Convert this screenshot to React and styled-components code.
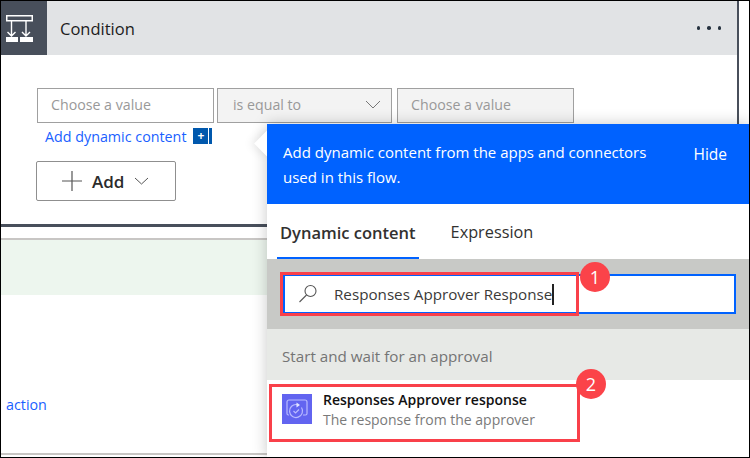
import React from "react";
import styled, { createGlobalStyle } from "styled-components";

const Global = createGlobalStyle`
  html, body { margin: 0; padding: 0; background: #fff; }
  * { box-sizing: border-box; }
`;

const Page = styled.div`
  position: relative;
  width: 750px;
  height: 458px;
  border: 1px solid #000;
  overflow: hidden;
  font-family: "Open Sans", "Noto Sans", sans-serif;
  background: #fff;
`;

const Card = styled.div`
  width: 738px;
  height: 226px;
  border-right: 2px solid #484f5b;
  border-bottom: 3px solid #484f5b;
`;

const Header = styled.div`
  display: flex;
  align-items: center;
  height: 54px;
  background: #e1e3e5;
`;

const IconBox = styled.div`
  width: 46px;
  height: 54px;
  padding-left: 5px;
  background: #484f5b;
  display: flex;
  align-items: center;
  flex: none;
`;

const Title = styled.div`
  margin: 1px 0 0 13px;
  font-size: 16.5px;
  color: #1c1c1c;
  flex: 1;
`;

const Dots = styled.div`
  display: flex;
  gap: 7px;
  margin-right: 16px;
`;

const Dot = styled.span`
  width: 3.5px;
  height: 3.5px;
  border-radius: 50%;
  background: #26323f;
`;

const Body = styled.div`
  padding: 33px 0 0 36px;
`;

const Fields = styled.div`
  display: flex;
  gap: 3px;
`;

const Field = styled.div`
  display: flex;
  align-items: center;
  justify-content: space-between;
  width: ${(p) => p.$w}px;
  margin-right: ${(p) => p.$mr || 0}px;
  height: 35px;
  padding: 0 13px 2px;
  border: 1px solid #a0a0a0;
  background: ${(p) => (p.$filled ? "#f3f3f3" : "#fff")};
  color: #999;
  font-size: 14.2px;
`;

const SelectField = styled(Field)`
  padding: 0 10px 2px 15px;
`;

const LinkRow = styled.div`
  display: flex;
  align-items: center;
  height: 22px;
  margin: 2px 0 0 8px;
`;

const DynLink = styled.a`
  color: #1a5fff;
  font-size: 14.3px;
`;

const PlusBox = styled.span`
  width: 15px;
  height: 16px;
  margin-left: 7px;
  background: #0058ad;
  color: #fff;
  font-size: 12px;
  font-weight: 700;
  line-height: 15px;
  text-align: center;
`;

const PlusBar = styled.span`
  width: 3px;
  height: 16px;
  margin-left: 1px;
  background: #0058ad;
`;

const AddButton = styled.div`
  display: flex;
  align-items: center;
  width: 140px;
  height: 40px;
  margin: 14px 0 0 -1px;
  padding-left: 25px;
  border: 1px solid #8f8f8f;
  border-radius: 2px;
`;

const AddLabel = styled.span`
  margin: 0 10px;
  font-size: 17px;
  font-weight: 600;
  color: #2b2b2b;
`;

const GreyLine = styled.div`
  height: 2px;
  margin-top: ${(p) => p.$top}px;
  background: #c8c6c4;
`;

const GreenBand = styled.div`
  height: 55px;
  background: #edf6ee;
`;

const ActionLink = styled.a`
  display: block;
  margin: 100px 0 0 5px;
  height: 20px;
  color: #1a5fff;
  font-size: 14.3px;
`;

const Panel = styled.div`
  position: absolute;
  left: 266px;
  top: 123px;
  right: -1px;
  bottom: -1px;
  background: #fff;
  box-shadow: 0 0 14px rgba(0, 0, 0, 0.22);
`;

const Arrow = styled.div`
  position: absolute;
  left: -9px;
  top: 10px;
  width: 19px;
  height: 19px;
  background: #fff;
  transform: rotate(45deg);
  box-shadow: -3px 3px 8px rgba(0, 0, 0, 0.08);
`;

const Banner = styled.div`
  position: relative;
  display: flex;
  justify-content: space-between;
  height: 80px;
  padding: 16px 23px 0 16px;
  background: #0062ff;
  color: #fff;
  font-size: 15px;
  line-height: 25px;
`;

const BannerText = styled.div`
  width: 400px;
`;

const Hide = styled.span`
  margin-top: 2px;
  font-size: 15.5px;
`;

const Tabs = styled.div`
  display: flex;
  height: 55px;
  padding-left: 10px;
`;

const Tab = styled.div`
  display: flex;
  align-items: center;
  height: 55px;
  padding: 3px 3px 0;
  margin-right: 29px;
  font-size: ${(p) => (p.$active ? 16.5 : 16.3)}px;
  font-weight: ${(p) => (p.$active ? 600 : 400)};
  color: #323130;
  border-bottom: 2px solid ${(p) => (p.$active ? "#0062ff" : "transparent")};
`;

const SearchStrip = styled.div`
  height: 70px;
  padding: 15px 14px 0 16px;
  background: #c8c9c6;
`;

const SearchBox = styled.div`
  display: flex;
  align-items: center;
  height: 40px;
  padding-left: 13px;
  border: 2px solid #0062ff;
  background: #fff;
  color: #3b3a39;
  font-size: 15.2px;
`;

const SearchText = styled.span`
  margin-left: 16px;
`;

const Caret = styled.span`
  width: 1.5px;
  height: 21px;
  background: #222;
`;

const GroupLabel = styled.div`
  display: flex;
  align-items: center;
  height: 51px;
  padding: 3px 0 0 15px;
  background: #e7e9e6;
  color: #747474;
  font-size: 15.2px;
`;

const Result = styled.div`
  display: flex;
  padding: 14px 0 0 15px;
`;

const ResultIcon = styled.div`
  width: 30px;
  height: 30px;
  flex: none;
  background: #6264f0;
  display: flex;
  align-items: center;
  justify-content: center;
`;

const ResultText = styled.div`
  margin: -4px 0 0 11px;
  font-size: 14px;
  line-height: 20px;
`;

const ResultName = styled.div`
  font-weight: 600;
  color: #111;
`;

const ResultSub = styled.div`
  color: #7a7a7a;
`;

const RedBox = styled.div`
  position: absolute;
  left: ${(p) => p.$x}px;
  top: ${(p) => p.$y}px;
  width: ${(p) => p.$w}px;
  height: ${(p) => p.$h}px;
  border: 3px solid #f9404a;
`;

const Badge = styled.div`
  position: absolute;
  left: ${(p) => p.$x - 15}px;
  top: ${(p) => p.$y - 15}px;
  width: 30px;
  height: 30px;
  border-radius: 50%;
  background: #fb4349;
  color: #fff;
  font-size: 18px;
  line-height: 30px;
  text-align: center;
`;

function ConditionIcon() {
  return (
    <svg width="27" height="27" viewBox="0 0 27 27" fill="none" stroke="#fff">
      <rect x="0.75" y="0.75" width="25.5" height="5" strokeWidth="1.5" />
      <path d="M5.5 6v15M20 6v15M1.5 17l4 4 4-4M16 17l4 4 4-4" strokeWidth="1.4" />
      <rect x="0" y="22" width="12" height="5" fill="#fff" stroke="none" />
      <rect x="14" y="22" width="13" height="5" fill="#fff" stroke="none" />
    </svg>
  );
}

function ApprovalIcon() {
  return (
    <svg width="22" height="22" viewBox="0 0 22 22" fill="none" stroke="#b9bbff" strokeWidth="1.2">
      <path d="M3 17H2.5A1.5 1.5 0 0 1 1 15.5V4a2 2 0 0 1 2-2h16a2 2 0 0 1 2 2v11.5a1.5 1.5 0 0 1-1.5 1.5H17" />
      <path d="M15.5 9.5A6.5 6.5 0 1 1 11 6.6" />
      <path d="M10.5 4.5l3.5 2.5-3.5 2.5z" fill="#e4e5ff" stroke="none" />
      <path d="M7.5 13l2 2 3.5-3.5" />
    </svg>
  );
}

function App() {
  return (
    <Page>
      <Global />
      <Card>
        <Header>
          <IconBox>
            <ConditionIcon />
          </IconBox>
          <Title>Condition</Title>
          <Dots>
            <Dot />
            <Dot />
            <Dot />
          </Dots>
        </Header>
        <Body>
          <Fields>
            <Field $w={177}>Choose a value</Field>
            <SelectField $w={175} $mr={2} $filled>
              is equal to
              <svg width="16" height="9" viewBox="0 0 16 9" fill="none" stroke="#777">
                <path d="M1 1l7 7 7-7" />
              </svg>
            </SelectField>
            <Field $w={177} $filled>Choose a value</Field>
          </Fields>
          <LinkRow>
            <DynLink>Add dynamic content</DynLink>
            <PlusBox>+</PlusBox>
            <PlusBar />
          </LinkRow>
          <AddButton>
            <svg width="20" height="20" viewBox="0 0 20 20" stroke="#555" strokeWidth="1.2">
              <path d="M10 0v20M0 10h20" />
            </svg>
            <AddLabel>Add</AddLabel>
            <svg width="15" height="8" viewBox="0 0 15 8" fill="none" stroke="#555">
              <path d="M1 1l6.5 6L14 1" />
            </svg>
          </AddButton>
        </Body>
      </Card>
      <GreyLine $top={11} />
      <GreenBand />
      <ActionLink>action</ActionLink>
      <GreyLine $top={38} />

      <Panel>
        <Arrow />
        <Banner>
          <BannerText>Add dynamic content from the apps and connectors used in this flow.</BannerText>
          <Hide>Hide</Hide>
        </Banner>
        <Tabs>
          <Tab $active>Dynamic content</Tab>
          <Tab>Expression</Tab>
        </Tabs>
        <SearchStrip>
          <SearchBox>
            <svg width="20" height="20" viewBox="0 0 20 20" fill="none" stroke="#555" strokeWidth="1.1">
              <circle cx="12.5" cy="7" r="5.5" />
              <path d="M8.5 11L1.5 18" />
            </svg>
            <SearchText>Responses Approver Response</SearchText>
            <Caret />
          </SearchBox>
        </SearchStrip>
        <GroupLabel>Start and wait for an approval</GroupLabel>
        <Result>
          <ResultIcon>
            <ApprovalIcon />
          </ResultIcon>
          <ResultText>
            <ResultName>Responses Approver response</ResultName>
            <ResultSub>The response from the approver</ResultSub>
          </ResultText>
        </Result>
      </Panel>

      <RedBox $x={279} $y={271} $w={299} $h={44} />
      <Badge $x={594} $y={276}>1</Badge>
      <RedBox $x={268} $y={383} $w={311} $h={58} />
      <Badge $x={590} $y={383}>2</Badge>
    </Page>
  );
}

export default App;
